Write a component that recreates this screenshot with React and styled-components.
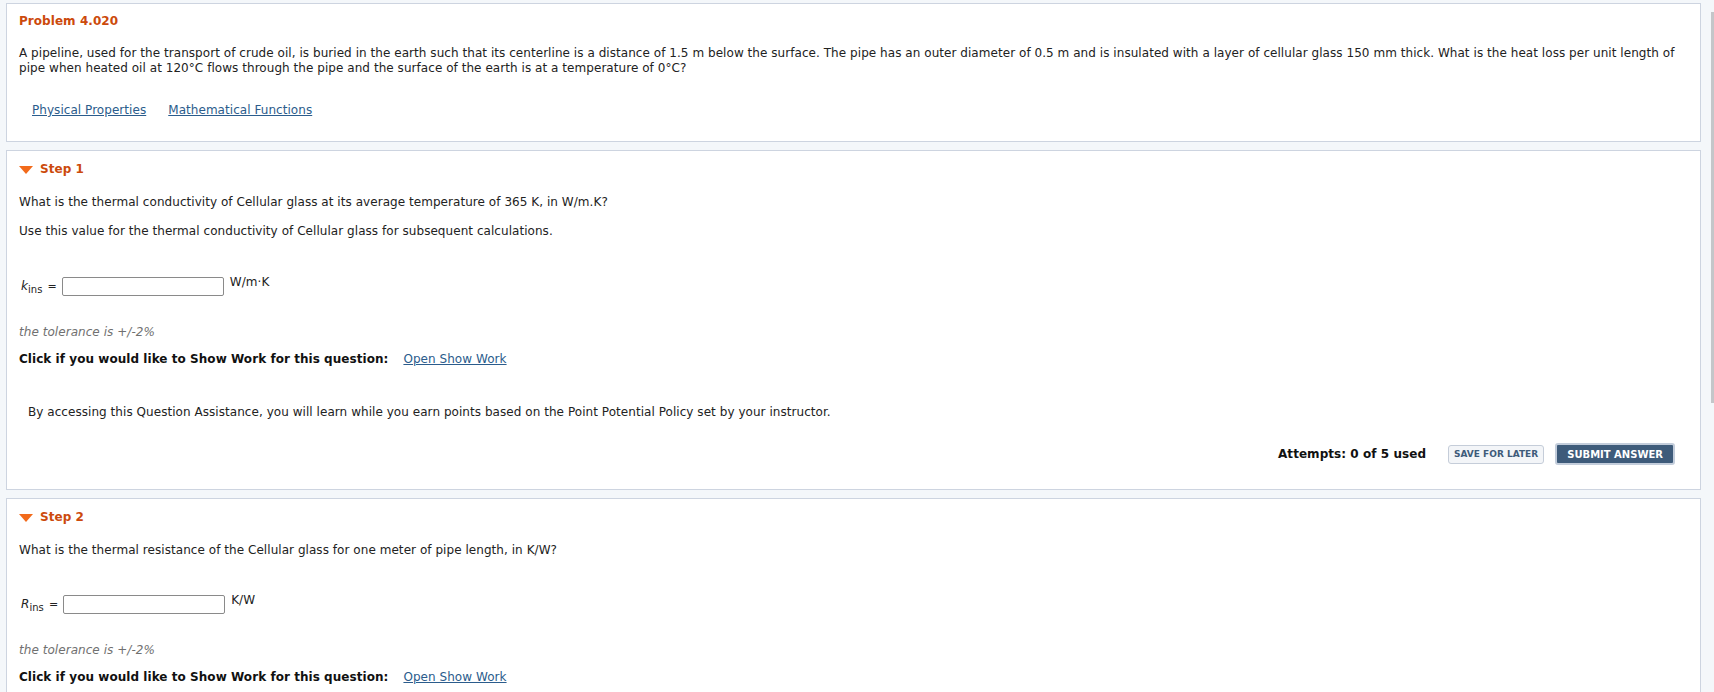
import { createGlobalStyle, styled } from "styled-components";

const GlobalStyle = createGlobalStyle`
  html, body {
    margin: 0;
    padding: 0;
    background: #f4f7fa;
  }
  body {
    font-family: Verdana, "DejaVu Sans", sans-serif;
    font-size: 12px;
    line-height: 15px;
    letter-spacing: 0.05px;
    color: #222;
  }
`;

const Page = styled.div`
  padding: 3px 13px 0 6px;
`;

const Panel = styled.section`
  background: #fff;
  border: 1px solid #cdd4e0;
  padding: ${(p) => p.$top || 10}px 12px ${(p) => p.$bottom || 23}px 12px;
  margin-bottom: 8px;
`;

const Title = styled.div`
  color: #cc4a0c;
  font-weight: bold;
`;

const Paragraph = styled.p`
  margin: ${(p) => p.$top || 0}px 0 0 0;
`;

const Links = styled.div`
  display: flex;
  gap: 22px;
  margin-top: 27px;
  padding-left: 13px;
`;

const Link = styled.a`
  color: #2b5c8c;
  text-decoration: underline;
  cursor: pointer;
`;

const StepHeader = styled.div`
  display: flex;
  align-items: center;
  gap: 7px;
  color: #cc4a0c;
  font-weight: bold;
`;

const Triangle = styled.span`
  width: 0;
  height: 0;
  border-left: 7px solid transparent;
  border-right: 7px solid transparent;
  border-top: 8px solid #f26a1b;
  margin-top: 1px;
`;

const AnswerRow = styled.div`
  display: flex;
  align-items: center;
  margin-top: ${(p) => p.$top}px;
  height: 20px;
`;

const Symbol = styled.span`
  font-style: italic;
  margin-left: 2px;
  sub {
    font-style: normal;
    font-size: 10px;
    vertical-align: -3px;
    line-height: 0;
  }
`;

const Equals = styled.span`
  margin: 0 5px 0 5px;
  font-size: 11px;
`;

const Input = styled.input`
  width: 162px;
  height: 19px;
  box-sizing: border-box;
  border: 1px solid #8a8a8a;
  border-radius: 2px;
  padding: 0 4px;
  font: inherit;
`;

const Unit = styled.span`
  margin-left: 6px;
  align-self: flex-start;
  margin-top: -1px;
`;

const Tolerance = styled.div`
  margin-top: 29px;
  font-style: italic;
  color: #707070;
`;

const ShowWork = styled.div`
  margin-top: 12px;
  font-weight: bold;
  color: #111;
  display: flex;
  gap: 15px;
  a {
    font-weight: normal;
  }
`;

const Assist = styled.div`
  margin-top: 38px;
  padding-left: 9px;
`;

const ActionBar = styled.div`
  display: flex;
  justify-content: flex-end;
  align-items: center;
  margin-top: 23px;
  padding-right: 13px;
`;

const Attempts = styled.span`
  font-weight: bold;
  color: #111;
  margin-right: 22px;
`;

const Button = styled.button`
  font-family: Verdana, "DejaVu Sans", sans-serif;
  font-weight: bold;
  text-transform: uppercase;
  border-radius: 3px;
  cursor: pointer;
  box-sizing: border-box;
  letter-spacing: 0;
  background: ${(p) => (p.$primary ? "#3e5b7a" : "#f3f5f8")};
  color: ${(p) => (p.$primary ? "#fff" : "#3e5b7a")};
  border: ${(p) => (p.$primary ? "2px solid #c3cddb" : "1px solid #c5cdd9")};
  font-size: ${(p) => (p.$primary ? 10 : 9)}px;
  height: ${(p) => (p.$primary ? 22 : 19)}px;
  padding: ${(p) => (p.$primary ? "0 10px" : "0 5px")};
  margin-left: ${(p) => (p.$primary ? 11 : 0)}px;
`;

const ScrollThumb = styled.div`
  position: fixed;
  top: 12px;
  right: 0;
  width: 3px;
  height: 391px;
  background: #c4c6c9;
`;

function Step({ number, question, note, symbol, unit, gapToInput, children }) {
  return (
    <Panel $top={11} $bottom={children ? 24 : 14}>
      <StepHeader>
        <Triangle />
        Step {number}
      </StepHeader>
      <Paragraph $top={18}>{question}</Paragraph>
      {note && <Paragraph $top={14}>{note}</Paragraph>}
      <AnswerRow $top={gapToInput}>
        <Symbol>
          {symbol}
          <sub>ins</sub>
        </Symbol>
        <Equals>=</Equals>
        <Input type="text" />
        <Unit>{unit}</Unit>
      </AnswerRow>
      <Tolerance>the tolerance is +/-2%</Tolerance>
      <ShowWork>
        Click if you would like to Show Work for this question:
        <Link>Open Show Work</Link>
      </ShowWork>
      {children}
    </Panel>
  );
}

export default function App() {
  return (
    <>
      <GlobalStyle />
      <Page>
        <Panel>
          <Title>Problem 4.020</Title>
          <Paragraph $top={17}>
            A pipeline, used for the transport of crude oil, is buried in the earth such that its centerline is a
            distance of 1.5 m below the surface. The pipe has an outer diameter of 0.5 m and is insulated with a layer
            of cellular glass 150 mm thick. What is the heat loss per unit length of pipe when heated oil at 120°C
            flows through the pipe and the surface of the earth is at a temperature of 0°C?
          </Paragraph>
          <Links>
            <Link>Physical Properties</Link>
            <Link>Mathematical Functions</Link>
          </Links>
        </Panel>

        <Step
          number={1}
          question="What is the thermal conductivity of Cellular glass at its average temperature of 365 K, in W/m.K?"
          note="Use this value for the thermal conductivity of Cellular glass for subsequent calculations."
          symbol="k"
          unit="W/m·K"
          gapToInput={37}
        >
          <Assist>
            By accessing this Question Assistance, you will learn while you earn points based on the Point Potential
            Policy set by your instructor.
          </Assist>
          <ActionBar>
            <Attempts>Attempts: 0 of 5 used</Attempts>
            <Button>Save for Later</Button>
            <Button $primary>Submit Answer</Button>
          </ActionBar>
        </Step>

        <Step
          number={2}
          question="What is the thermal resistance of the Cellular glass for one meter of pipe length, in K/W?"
          symbol="R"
          unit="K/W"
          gapToInput={36}
        />
      </Page>
      <ScrollThumb />
    </>
  );
}
